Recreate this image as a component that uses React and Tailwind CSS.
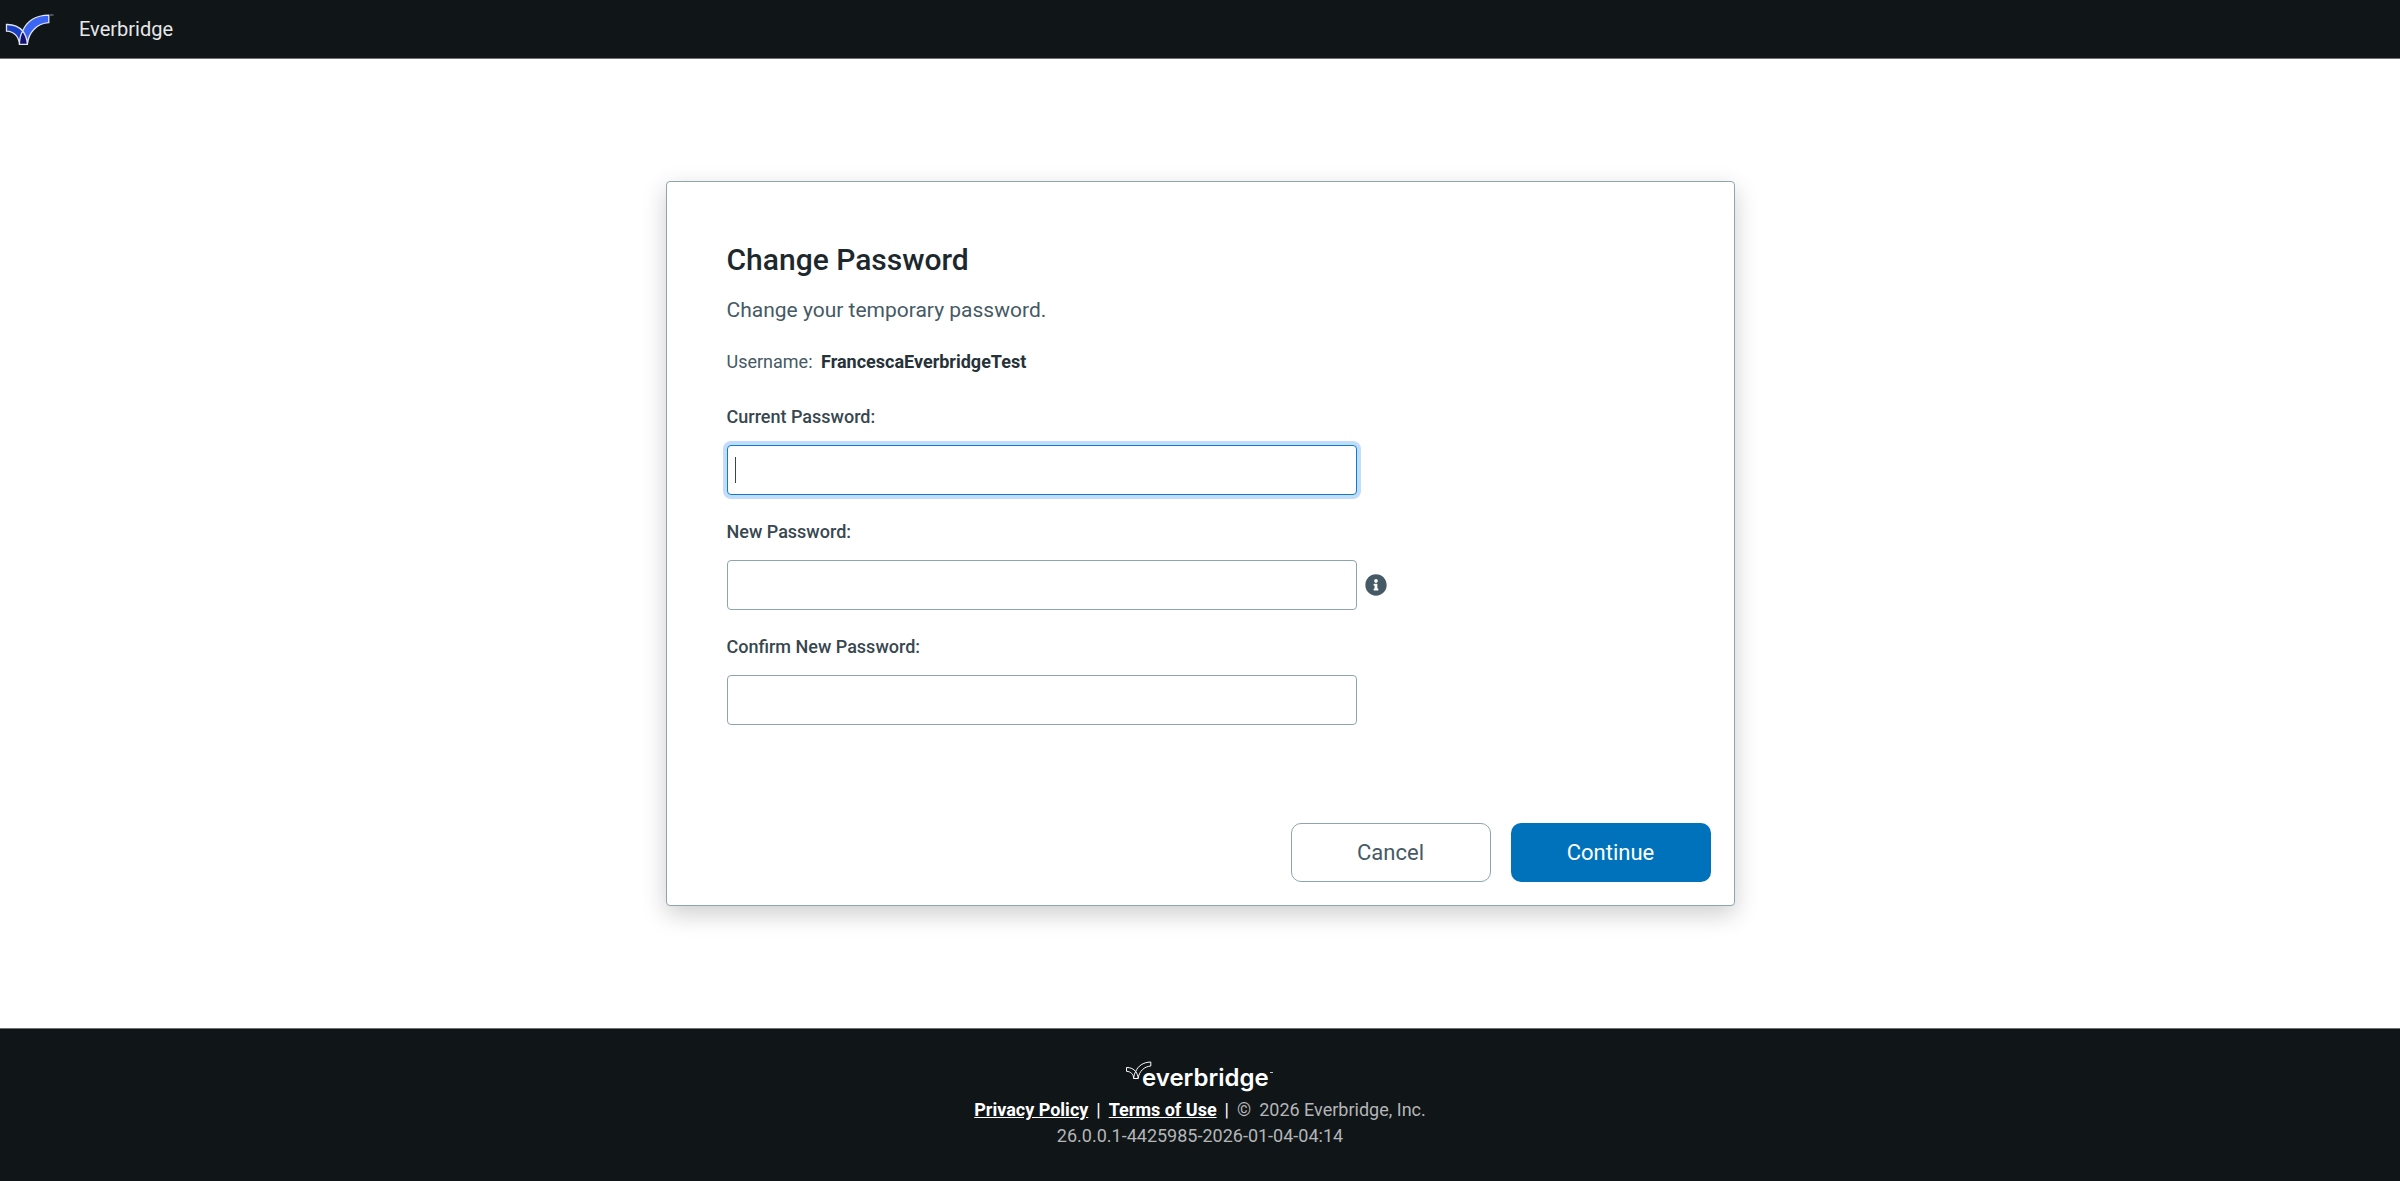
import { useState } from 'react'

function LogoMark() {
  return (
    <svg viewBox="0 0 50 34" className="h-[34px] w-[50px]" fill="none" role="img" aria-label="Everbridge logo">
      <path d="M1.500 12.500C8.500 12.300 14 14.800 17.700 19C21.500 10 30 3.500 43.800 3.200V10.700C32 11.500 23.500 20 22.400 32.300H14.400C14 25 9.500 19.600 1.500 19.200Z" fill="#3b66f5" />
      <path d="M1.500 12.500C8.500 12.300 14 14.800 17.700 19C15.800 22 14.600 26 14.400 30C13 23.500 9 19.600 1.500 19.200Z" fill="#1b3fc4" />
      <path d="M17.700 19C20.500 22.500 22 27 22.400 32.300H14.400C14.500 27 15.600 22.500 17.700 19Z" fill="#14127a" />
      <path
        d="M1.500 12.500C8.500 12.300 14 14.800 17.700 19C21.500 10 30 3.500 43.800 3.200V10.700C32 11.500 23.500 20 22.400 32.300H14.400C14 25 9.500 19.600 1.500 19.200ZM17.700 19C15.600 22.500 14.500 27 14.400 32.300M17.700 19C20.500 22.500 22 27 22.400 32.300"
        stroke="#dfe3ee"
        strokeWidth="1.300"
      />
      <path d="M45 3H48.500" stroke="#8a8f94" strokeWidth="1" />
    </svg>
  )
}

function FooterLogo() {
  return (
    <svg viewBox="0 0 150 36" className="h-9 w-[150px]" fill="none" role="img" aria-label="everbridge">
      <path
        d="M1.500 7.500C5.500 7.400 8.600 9 10.700 11.500C13 6 18 2.200 25.800 2V6C19.500 6.500 14 11 13.200 18.500H8.700C8.500 14.500 6 11.500 1.500 11.300ZM10.700 11.500C9.500 13.500 8.800 16 8.700 18.500M10.700 11.500C12.200 13.500 13 16 13.200 18.500"
        stroke="#fff"
        strokeWidth="1"
      />
      <text x="17" y="26" fill="#fff" fontFamily="Inter, sans-serif" fontSize="24" fontWeight="600">everbridge</text>
      <path d="M145 12.500H148" stroke="#c5c8ca" strokeWidth="1" />
    </svg>
  )
}

function InfoIcon() {
  return (
    <svg viewBox="0 0 512 512" className="h-[22px] w-[22px]" aria-hidden="true">
      <path
        fill="#455a64"
        d="M256 8C119 8 8 119 8 256s111 248 248 248 248-111 248-248S393 8 256 8zm0 110c23 0 42 19 42 42s-19 42-42 42-42-19-42-42 19-42 42-42zm56 254c0 7-5 12-12 12h-88c-7 0-12-5-12-12v-24c0-7 5-12 12-12h12v-64h-12c-7 0-12-5-12-12v-24c0-7 5-12 12-12h64c7 0 12 5 12 12v100h12c7 0 12 5 12 12v24z"
      />
    </svg>
  )
}

const fields = [
  { id: 'currentPassword', label: 'Current Password:' },
  { id: 'newPassword', label: 'New Password:', info: true },
  { id: 'confirmPassword', label: 'Confirm New Password:' },
]

export default function App() {
  const [values, setValues] = useState({ currentPassword: '', newPassword: '', confirmPassword: '' })

  const handleChange = e => setValues({ ...values, [e.target.id]: e.target.value })

  return (
    <div className="flex min-h-screen flex-col bg-white font-[Roboto,sans-serif] text-[#455a64]">
      <header className="flex h-[59px] items-center gap-6 border-b border-[#6f7273] bg-[#101518] pl-[5px]">
        <LogoMark />
        <span className="text-xl text-[#e6e8e9]">Everbridge</span>
      </header>

      <main className="flex flex-1 items-center justify-center py-10">
        <form
          onSubmit={e => e.preventDefault()}
          className="w-full max-w-[1069px] rounded border border-[#90a4ae] bg-white shadow-[0_8px_24px_rgba(0,0,0,0.2)]"
        >
          <div className="px-[60px] pt-[60px]">
            <h1 className="text-[30px] leading-9 font-medium text-[#1d282d]">Change Password</h1>
            <p className="mt-4 text-[21px] leading-8">Change your temporary password.</p>
            <p className="mt-6 text-lg leading-6">
              Username: <strong className="ml-1 font-bold text-[#263238]">FrancescaEverbridgeTest</strong>
            </p>

            <div className="mt-[31px] flex flex-col gap-[25px]">
              {fields.map(field => (
                <div key={field.id}>
                  <label htmlFor={field.id} className="block text-lg leading-6 font-medium text-[#37474f]">
                    {field.label}
                  </label>
                  <div className="mt-4 flex items-center gap-2">
                    <div className="relative w-[630px]">
                      <input
                        id={field.id}
                        type="password"
                        value={values[field.id]}
                        onChange={handleChange}
                        autoFocus={field.id === 'currentPassword'}
                        className="peer block h-[50px] w-full rounded border border-[#90a4ae] bg-white px-2 text-xl caret-transparent outline-none focus:border-[#0f7dc9] focus:shadow-[0_0_0_4px_#c2dcfd]"
                      />
                      {!values[field.id] && (
                        <span className="pointer-events-none absolute top-3 left-2 hidden h-[26px] w-px bg-[#37474f] peer-focus:block" />
                      )}
                    </div>
                    {field.info && (
                      <button type="button" aria-label="Password rules">
                        <InfoIcon />
                      </button>
                    )}
                  </div>
                </div>
              ))}
            </div>
          </div>

          <div className="mt-[98px] flex justify-end gap-5 px-[23px] pb-[23px] text-[22px]">
            <button type="button" className="h-[59px] w-[200px] rounded-[10px] border border-[#90a4ae] bg-white">
              Cancel
            </button>
            <button type="submit" className="h-[59px] w-[200px] rounded-[10px] bg-[#0072bc] text-white">
              Continue
            </button>
          </div>
        </form>
      </main>

      <footer className="flex h-[153px] flex-col items-center border-t border-[#6f7273] bg-[#101518] pt-[31px] text-lg leading-[26px] text-[#b4b6b7]">
        <FooterLogo />
        <div className="mt-px flex gap-2 text-white">
          <a href="#privacy" className="font-bold underline">Privacy Policy</a>
          <span>|</span>
          <a href="#terms" className="font-bold underline">Terms of Use</a>
          <span>|</span>
          <span className="text-[#b4b6b7]">©</span>
          <span className="text-[#b4b6b7]">2026 Everbridge, Inc.</span>
        </div>
        <div>26.0.0.1-4425985-2026-01-04-04:14</div>
      </footer>
    </div>
  )
}
